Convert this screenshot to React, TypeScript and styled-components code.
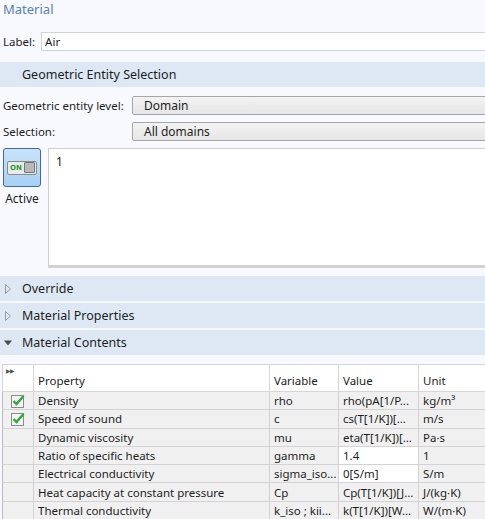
import styled, { createGlobalStyle } from 'styled-components'

const GlobalStyle = createGlobalStyle`
  html, body {
    margin: 0;
    padding: 0;
    background: #f7f9fe;
    overflow: hidden;
  }
  body {
    font-family: 'Noto Sans', 'Liberation Sans', sans-serif;
    font-size: 11.5px;
    color: #1e1e1e;
  }
`

const Page = styled.div`
  width: 485px;
  height: 519px;
  overflow: hidden;
  background: #f7f9fe;
`

const Title = styled.div`
  height: 32px;
  padding-left: 3px;
  font-size: 13px;
  line-height: 18px;
  color: #5a80b8;
`

const LabelRow = styled.div`
  display: flex;
  align-items: center;
  height: 19px;
  padding-left: 3px;
  gap: 6px;
`

const TextInput = styled.div`
  flex: 1;
  height: 17px;
  margin-right: -20px;
  background: #fff;
  border: 1px solid #cfd3da;
  border-right: none;
  padding-left: 3px;
  line-height: 17px;
`

const SectionHeader = styled.div<{ $top?: number }>`
  display: flex;
  align-items: center;
  height: 25px;
  margin-top: ${({ $top }) => $top ?? 2}px;
  background: #dde8f4;
  padding-left: 3px;
  gap: 9px;
  font-size: 12.5px;
`

const Arrow = styled.span`
  width: 10px;
  display: flex;
  justify-content: center;
`

const FormRow = styled.div<{ $top: number }>`
  display: flex;
  align-items: center;
  margin-top: ${({ $top }) => $top}px;
  height: 19px;
`

const FormLabel = styled.span`
  width: 129px;
  padding-left: 3px;
`

const Dropdown = styled.div`
  flex: 1;
  height: 17px;
  margin-right: -20px;
  border: 1px solid #a6a6a6;
  border-radius: 2px;
  background: linear-gradient(#f3f3f3, #e6e6e6);
  padding-left: 11px;
  line-height: 17px;
  font-size: 12px;
`

const SelectionArea = styled.div`
  display: flex;
  margin-top: 7px;
  gap: 6px;
  padding-left: 2px;
`

const ActiveColumn = styled.div`
  display: flex;
  flex-direction: column;
  align-items: center;
  width: 40px;
`

const ActiveButton = styled.div`
  box-sizing: border-box;
  width: 38px;
  height: 39px;
  border: 1px solid #3f6aa5;
  border-radius: 3px;
  background: linear-gradient(#c8e3fc, #a7d0f4);
  display: flex;
  align-items: center;
  justify-content: center;
`

const Toggle = styled.div`
  box-sizing: border-box;
  display: flex;
  align-items: center;
  justify-content: space-between;
  width: 30px;
  height: 14px;
  border: 1px solid #8a8a8a;
  border-radius: 2px;
  background: #e8ece8;
  padding: 0 1px 0 2px;
  font-family: 'DejaVu Sans', sans-serif;
  font-size: 7px;
  font-weight: bold;
  color: #2a9a3a;
`

const Knob = styled.span`
  width: 9px;
  height: 9px;
  border: 1px solid #777;
  border-radius: 1px;
  background: #b8b8b8;
`

const ActiveLabel = styled.div`
  margin-top: 3px;
  font-size: 12px;
`

const SelectionBox = styled.div`
  flex: 1;
  height: 108px;
  margin-right: -20px;
  background: #fff;
  border: 1px solid #cfcfcf;
  border-bottom: 3px solid #d2d2d2;
  padding: 4px 7px;
  font-size: 12px;
`

const Sections = styled.div`
  margin-top: 8px;
`

const Table = styled.table`
  margin: 9px 0 0 2px;
  border-collapse: collapse;
  table-layout: fixed;
  width: 503px;
`

const HeadCell = styled.th<{ $w: number }>`
  box-sizing: border-box;
  width: ${({ $w }) => $w}px;
  height: 27px;
  padding: 0 0 3px 4px;
  text-align: left;
  font-weight: normal;
  vertical-align: bottom;
  background: #fff;
  border: 1px solid #d6d6d6;
  position: relative;
`

const Cell = styled.td<{ $white?: boolean }>`
  box-sizing: border-box;
  height: 18.3px;
  padding: 0 0 0 4px;
  line-height: 17px;
  white-space: nowrap;
  overflow: hidden;
  background: ${({ $white }) => ($white ? '#fff' : '#f0f0f0')};
  border: 1px solid #d3d3d3;
  border-left-color: #b9b9b9;
`

const CheckCell = styled(Cell)`
  padding: 0;
  text-align: center;
  vertical-align: middle;
`

const ExpandMark = styled.span`
  position: absolute;
  left: 3px;
  top: 2px;
  font-size: 6px;
  color: #555;
  letter-spacing: -1px;
`

const Triangle = ({ open }: { open: boolean }) =>
  open ? (
    <svg width="8" height="6" viewBox="0 0 8 6">
      <path d="M0 0.5 L8 0.5 L4 5.5 Z" fill="#4a4a4a" />
    </svg>
  ) : (
    <svg width="6" height="10" viewBox="0 0 6 10">
      <path d="M0.5 0.5 L5.5 5 L0.5 9.5 Z" fill="none" stroke="#9a9a9a" />
    </svg>
  )

const Check = () => (
  <svg width="14" height="14" viewBox="0 0 14 14" style={{ display: 'block', margin: '0 auto' }}>
    <rect x="0.5" y="1.5" width="12" height="12" fill="#f4f4f4" stroke="#8c8c8c" />
    <path d="M2.5 7 L5.5 10 L12.5 2" fill="none" stroke="#2faa3c" strokeWidth="2.4" />
  </svg>
)

const rows = [
  { on: true, name: 'Density', v: 'rho', val: 'rho(pA[1/P...', unit: 'kg/m³' },
  { on: true, name: 'Speed of sound', v: 'c', val: 'cs(T[1/K])[...', unit: 'm/s' },
  { on: false, name: 'Dynamic viscosity', v: 'mu', val: 'eta(T[1/K])[...', unit: 'Pa·s' },
  { on: false, name: 'Ratio of specific heats', v: 'gamma', val: '1.4', unit: '1', edit: true },
  { on: false, name: 'Electrical conductivity', v: 'sigma_iso...', val: '0[S/m]', unit: 'S/m', edit: true },
  { on: false, name: 'Heat capacity at constant pressure', v: 'Cp', val: 'Cp(T[1/K])[J...', unit: 'J/(kg·K)' },
  { on: false, name: 'Thermal conductivity', v: 'k_iso ; kii...', val: 'k(T[1/K])[W...', unit: 'W/(m·K)' },
]

export default function App() {
  return (
    <Page>
      <GlobalStyle />
      <Title>Material</Title>
      <LabelRow>
        <span>Label:</span>
        <TextInput>Air</TextInput>
      </LabelRow>
      <SectionHeader $top={11}>
        <Arrow />
        Geometric Entity Selection
      </SectionHeader>
      <FormRow $top={9}>
        <FormLabel>Geometric entity level:</FormLabel>
        <Dropdown>Domain</Dropdown>
      </FormRow>
      <FormRow $top={7}>
        <FormLabel>Selection:</FormLabel>
        <Dropdown>All domains</Dropdown>
      </FormRow>
      <SelectionArea>
        <ActiveColumn>
          <ActiveButton>
            <Toggle>
              ON
              <Knob />
            </Toggle>
          </ActiveButton>
          <ActiveLabel>Active</ActiveLabel>
        </ActiveColumn>
        <SelectionBox>1</SelectionBox>
      </SelectionArea>
      <Sections>
        <SectionHeader $top={0}>
          <Arrow><Triangle open={false} /></Arrow>
          Override
        </SectionHeader>
        <SectionHeader>
          <Arrow><Triangle open={false} /></Arrow>
          Material Properties
        </SectionHeader>
        <SectionHeader>
          <Arrow><Triangle open /></Arrow>
          Material Contents
        </SectionHeader>
      </Sections>
      <Table>
        <thead>
          <tr>
            <HeadCell $w={31}>
              <ExpandMark>▶▶</ExpandMark>
            </HeadCell>
            <HeadCell $w={236}>Property</HeadCell>
            <HeadCell $w={69}>Variable</HeadCell>
            <HeadCell $w={80}>Value</HeadCell>
            <HeadCell $w={87}>Unit</HeadCell>
          </tr>
        </thead>
        <tbody>
          {rows.map((r) => (
            <tr key={r.name}>
              <CheckCell>{r.on && <Check />}</CheckCell>
              <Cell>{r.name}</Cell>
              <Cell>{r.v}</Cell>
              <Cell $white={r.edit}>{r.val}</Cell>
              <Cell>{r.unit}</Cell>
            </tr>
          ))}
        </tbody>
      </Table>
    </Page>
  )
}
